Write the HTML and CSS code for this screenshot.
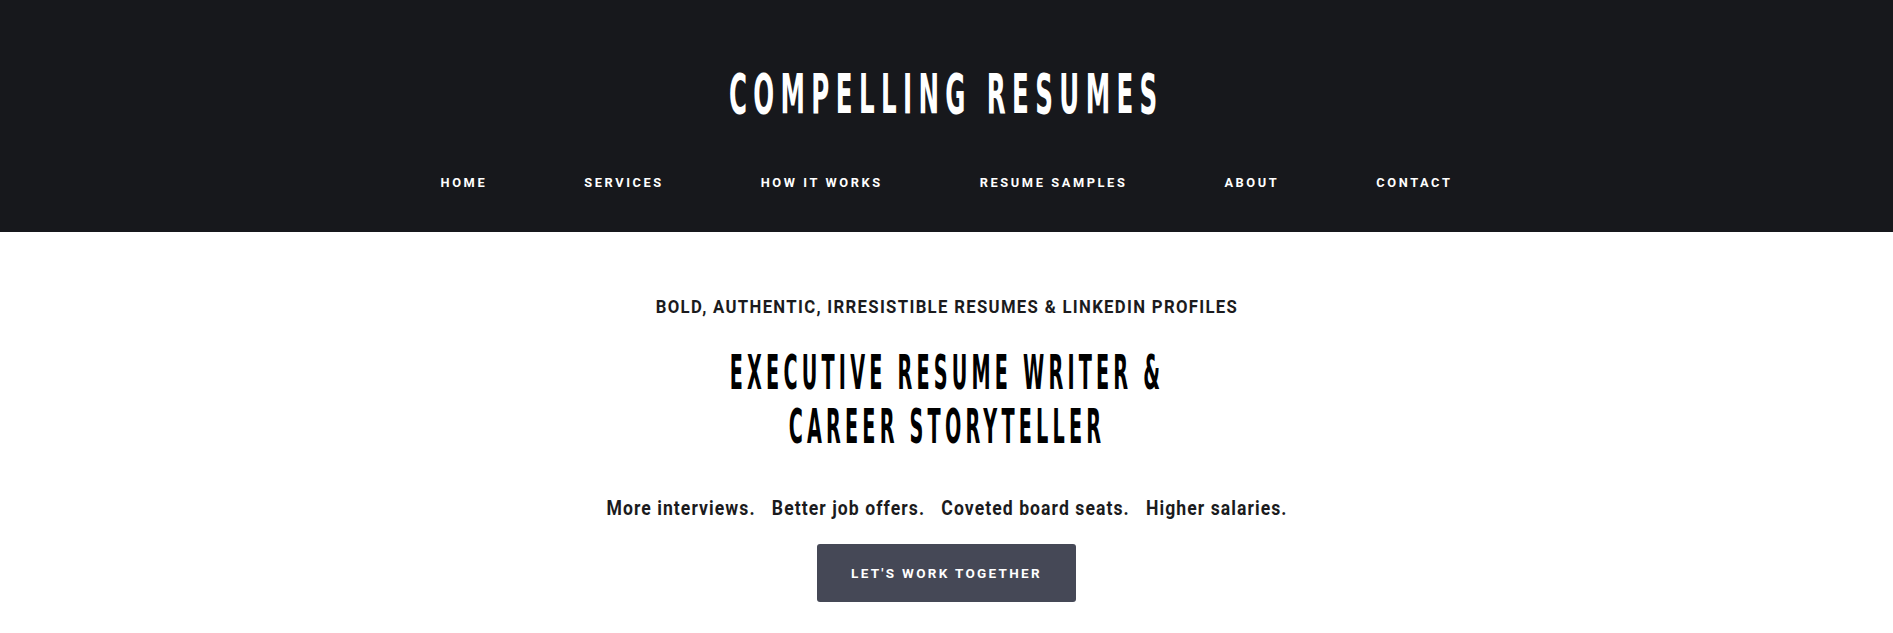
FILE: index.html
```html
<!DOCTYPE html>
<html lang="en">
<head>
  <meta charset="UTF-8">
  <title>Compelling Resumes</title>
  <link rel="stylesheet" href="styles.css">
</head>
<body>
  <header class="site-header">
    <div class="brand"><span class="brand-text">COMPELLING RESUMES</span></div>
    <nav class="main-nav">
      <a href="#">HOME</a>
      <a href="#">SERVICES</a>
      <a href="#">HOW IT WORKS</a>
      <a href="#">RESUME SAMPLES</a>
      <a href="#">ABOUT</a>
      <a href="#">CONTACT</a>
    </nav>
  </header>

  <section class="hero">
    <p class="eyebrow"><span>BOLD, AUTHENTIC, IRRESISTIBLE RESUMES &amp; LINKEDIN PROFILES</span></p>
    <h1 class="headline"><span>EXECUTIVE RESUME WRITER &amp;<br>CAREER STORYTELLER</span></h1>
    <p class="tagline"><span>More interviews.&nbsp;&nbsp; Better job offers.&nbsp;&nbsp; Coveted board seats.&nbsp;&nbsp; Higher salaries.</span></p>
    <a class="cta" href="#">LET'S WORK TOGETHER</a>
  </section>
</body>
</html>
```

FILE: styles.css
```css
body {
  margin: 0;
  font-family: Roboto, "Liberation Sans", sans-serif;
  color: #1b1b1d;
  background: #fff;
}
.site-header {
  background: #17181c;
  height: 232px;
  box-sizing: border-box;
  padding-top: 64px;
  text-align: center;
}
.brand {
  line-height: 60px;
  height: 60px;
}
/* no condensed display font offline, so squeeze a bold sans */
.brand-text {
  display: inline-block;
  font-family: "DejaVu Sans", "Liberation Sans", sans-serif;
  font-weight: 700;
  font-size: 56px;
  letter-spacing: 14.6px;
  color: #fff;
  transform: scaleX(0.438);
}
.main-nav {
  display: flex;
  justify-content: center;
  margin-top: 51px;
}
.main-nav a {
  color: #fff;
  text-decoration: none;
  font-weight: 700;
  font-size: 12.8px;
  letter-spacing: 2.6px;
  padding: 0 48.5px;
  line-height: 16px;
}
.hero {
  text-align: center;
  padding-top: 64px;
}
.eyebrow {
  margin: 0;
  line-height: 22px;
}
.eyebrow span {
  display: inline-block;
  font-weight: 700;
  font-size: 19px;
  letter-spacing: 1.5px;
  transform: scaleX(0.88);
}
.headline {
  margin: 26px 0 0;
  line-height: 54px;
}
.headline span {
  display: inline-block;
  font-family: "DejaVu Sans", "Liberation Sans", sans-serif;
  font-weight: 700;
  font-size: 48px;
  letter-spacing: 10.5px;
  color: #000;
  transform: scaleX(0.4);
}
.tagline {
  margin: 38px 0 0;
  line-height: 22px;
}
.tagline span {
  display: inline-block;
  font-weight: 700;
  font-size: 20px;
  letter-spacing: 1.2px;
  transform: scaleX(0.88);
}
.cta {
  display: inline-block;
  margin-top: 23px;
  width: 259px;
  height: 58px;
  line-height: 58px;
  background: #454856;
  color: #fff;
  border-radius: 3px;
  text-decoration: none;
  font-weight: 700;
  font-size: 13.5px;
  letter-spacing: 2.3px;
}
```
